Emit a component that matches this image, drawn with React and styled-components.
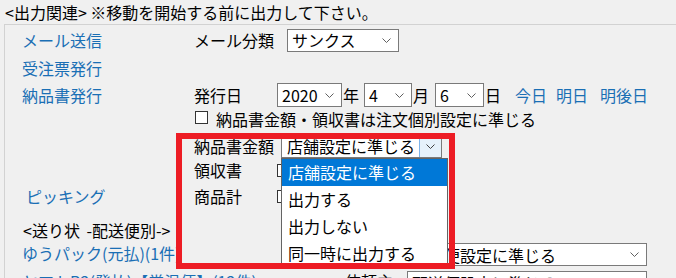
import styled, { createGlobalStyle } from "styled-components";

const GlobalStyle = createGlobalStyle`
  html, body {
    margin: 0;
    padding: 0;
    background: #f0f0f0;
    overflow: hidden;
  }
  * {
    box-sizing: border-box;
  }
`;

const Page = styled.div`
  position: relative;
  width: 676px;
  height: 278px;
  overflow: hidden;
  background: #f0f0f0;
  font-family: "Noto Sans CJK JP", "Noto Sans", sans-serif;
  font-size: 16px;
  line-height: 20px;
  color: #000;
`;

const Header = styled.div`
  height: 24px;
  padding-left: 5px;
  display: flex;
  align-items: center;
  white-space: nowrap;
`;

const Panel = styled.div`
  margin-left: 4px;
  border-top: 1px solid #d2d2d2;
  border-left: 1px solid #d2d2d2;
  padding: 0 29px 0 17px;
`;

const Row = styled.div`
  display: flex;
  align-items: ${(p) => p.$align || "center"};
  height: ${(p) => p.$h}px;
  padding-bottom: ${(p) => p.$pb || 0}px;
  white-space: nowrap;
`;

const LeftCol = styled.div`
  width: 172px;
  flex-shrink: 0;
`;

const NavLink = styled.span`
  color: #1a6fb5;
  padding-left: ${(p) => p.$indent || 0}px;
  cursor: pointer;
`;

const Label = styled.span`
  display: inline-block;
  width: ${(p) => p.$w}px;
  flex-shrink: 0;
`;

const Unit = styled.span`
  margin-left: 1px;
`;

const DayLink = styled.span`
  color: #1a6fb5;
  margin-left: ${(p) => p.$ml}px;
  cursor: pointer;
`;

const Select = styled.div`
  display: flex;
  align-items: center;
  justify-content: space-between;
  width: ${(p) => p.$w}px;
  height: ${(p) => p.$h || 23}px;
  margin-left: ${(p) => p.$ml || 0}px;
  padding: 0 7px 0 4px;
  background: #fff;
  border: 1px solid #7a7a7a;
  flex-shrink: 0;
  white-space: nowrap;
`;

const Checkbox = styled.span`
  display: inline-block;
  width: 13px;
  height: 13px;
  margin-top: ${(p) => p.$mt || 0}px;
  margin-left: ${(p) => p.$ml || 0}px;
  border: 1px solid #333;
  background: #fff;
  flex-shrink: 0;
`;

const CheckText = styled.span`
  margin-left: 8px;
`;

const ComboWrap = styled.div`
  position: relative;
  margin-left: 4px;
`;

const Combo = styled.div`
  display: flex;
  width: 161px;
  height: 23px;
  background: #fff;
  border: 1px solid #7a7a7a;
`;

const ComboText = styled.span`
  flex: 1;
  padding-left: 5px;
  line-height: 21px;
`;

const ComboButton = styled.span`
  width: 22px;
  display: flex;
  align-items: center;
  justify-content: center;
  background: #e5f1fb;
  border-left: 1px solid #7eb4ea;
`;

const DropList = styled.div`
  position: absolute;
  top: 23px;
  left: 0;
  width: 167px;
  background: #fff;
  border: 1px solid #646464;
  z-index: 5;
`;

const DropItem = styled.div`
  height: 27px;
  line-height: 27px;
  padding-left: 6px;
  background: ${(p) => (p.$active ? "#0078d7" : "transparent")};
  color: ${(p) => (p.$active ? "#fff" : "#000")};
`;

const Heading = styled.span`
  padding-left: 1px;
  word-spacing: 3px;
`;

const ShipLink = styled.span`
  flex: 1;
  color: #1a6fb5;
  cursor: pointer;
`;

const ShipLabel = styled.span`
  margin-right: 14px;
`;

const Highlight = styled.div`
  position: absolute;
  left: 176px;
  top: 133px;
  width: 279px;
  height: 136px;
  border: 6px solid #ed1c24;
  pointer-events: none;
  z-index: 10;
`;

const Chevron = ({ color = "#606060" }) => (
  <svg width="9" height="5" viewBox="0 0 9 5">
    <polyline points="0.5,0.5 4.5,4.5 8.5,0.5" fill="none" stroke={color} strokeWidth="1" />
  </svg>
);

const PlainSelect = ({ w, h, ml, children }) => (
  <Select $w={w} $h={h} $ml={ml}>
    <span>{children}</span>
    <Chevron />
  </Select>
);

const options = ["店舗設定に準じる", "出力する", "出力しない", "同一時に出力する"];

const App = () => {
  return (
    <Page>
      <GlobalStyle />
      <Header>&lt;出力関連&gt; ※移動を開始する前に出力して下さい。</Header>
      <Panel>
        <Row $h={30}>
          <LeftCol>
            <NavLink>メール送信</NavLink>
          </LeftCol>
          <Label $w={93}>メール分類</Label>
          <PlainSelect w={112}>サンクス</PlainSelect>
        </Row>
        <Row $h={26}>
          <LeftCol>
            <NavLink>受注票発行</NavLink>
          </LeftCol>
        </Row>
        <Row $h={28}>
          <LeftCol>
            <NavLink>納品書発行</NavLink>
          </LeftCol>
          <Label $w={83}>発行日</Label>
          <PlainSelect w={65} h={24}>2020</PlainSelect>
          <Unit>年</Unit>
          <PlainSelect w={48} h={24} ml={5}>4</PlainSelect>
          <Unit>月</Unit>
          <PlainSelect w={49} h={24} ml={6}>6</PlainSelect>
          <Unit>日</Unit>
          <DayLink $ml={14}>今日</DayLink>
          <DayLink $ml={9}>明日</DayLink>
          <DayLink $ml={12}>明後日</DayLink>
        </Row>
        <Row $h={25} $align="flex-start">
          <LeftCol />
          <Checkbox $mt={2} $ml={1} />
          <CheckText>納品書金額・領収書は注文個別設定に準じる</CheckText>
        </Row>
        <Row $h={24}>
          <LeftCol />
          <Label $w={83}>納品書金額</Label>
          <ComboWrap>
            <Combo>
              <ComboText>店舗設定に準じる</ComboText>
              <ComboButton>
                <Chevron color="#404040" />
              </ComboButton>
            </Combo>
            <DropList>
              {options.map((o, i) => (
                <DropItem key={o} $active={i === 0}>
                  {o}
                </DropItem>
              ))}
            </DropList>
          </ComboWrap>
        </Row>
        <Row $h={24}>
          <LeftCol />
          <Label $w={83}>領収書</Label>
          <Checkbox />
        </Row>
        <Row $h={28}>
          <LeftCol>
            <NavLink $indent={4}>ピッキング</NavLink>
          </LeftCol>
          <Label $w={83}>商品計</Label>
          <Checkbox />
        </Row>
        <Row $h={33} $align="flex-end" $pb={3}>
          <Heading>&lt;送り状 -配送便別-&gt;</Heading>
        </Row>
        <Row $h={28} $align="flex-start">
          <ShipLink>ゆうパック(元払)(1件)</ShipLink>
          <PlainSelect w={240}>配送便設定に準じる</PlainSelect>
        </Row>
        <Row $h={28} $align="flex-start">
          <ShipLink>ヤマトB2(発払)【常温便】(12件)</ShipLink>
          <ShipLabel>依頼主</ShipLabel>
          <PlainSelect w={240}>配送便設定に準じる</PlainSelect>
        </Row>
      </Panel>
      <Highlight />
    </Page>
  );
};

export default App;
